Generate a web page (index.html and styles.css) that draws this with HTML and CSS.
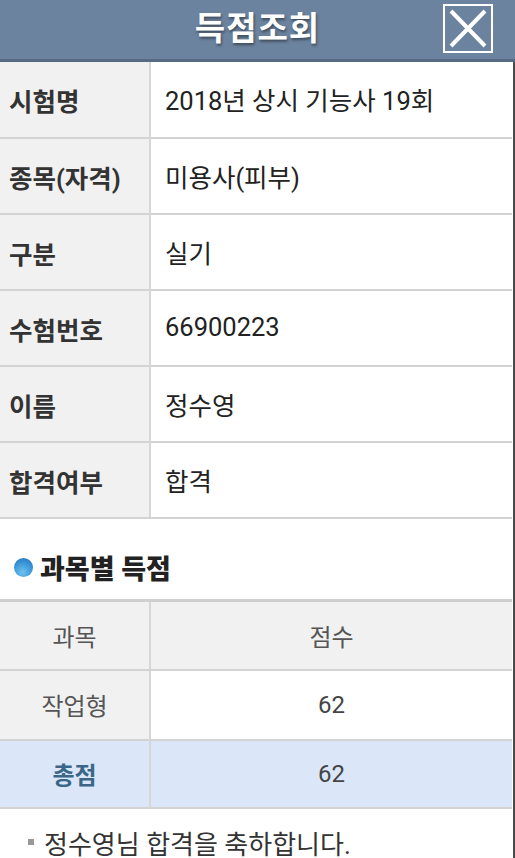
FILE: index.html
```html
<!DOCTYPE html>
<html lang="ko">
<head>
  <meta charset="UTF-8" />
  <meta name="viewport" content="width=device-width, initial-scale=1.0"/>
  <title>득점조회</title>
  <link rel="stylesheet" href="styles.css">
</head>
<body>
  <div class="page">
    <div class="topbar">
      <h1 class="title">득점조회</h1>
      <a class="close" href="#" aria-label="닫기">
        <svg width="46" height="45" viewBox="0 0 46 45">
          <path d="M6 5 L40 40 M40 5 L6 40" stroke="#fff" stroke-width="4" fill="none"/>
        </svg>
      </a>
    </div>

    <div class="content">
      <table class="info">
        <tr><th>시험명</th><td>2018년 상시 기능사 19회</td></tr>
        <tr><th>종목(자격)</th><td>미용사(피부)</td></tr>
        <tr><th>구분</th><td>실기</td></tr>
        <tr><th>수험번호</th><td>66900223</td></tr>
        <tr><th>이름</th><td>정수영</td></tr>
        <tr><th>합격여부</th><td>합격</td></tr>
      </table>

      <!-- 과목별 득점 -->
      <h2 class="section"><span class="dot"></span>과목별 득점</h2>

      <table class="scores">
        <tr class="head"><th>과목</th><th>점수</th></tr>
        <tr><th>작업형</th><td>62</td></tr>
        <tr class="total"><th>총점</th><td>62</td></tr>
      </table>

      <p class="msg"><span class="sq"></span>정수영님 합격을 축하합니다.</p>
    </div>
  </div>
</body>
</html>
```

FILE: styles.css
```css
* {
  box-sizing: border-box;
  margin: 0;
  padding: 0;
}

body {
  background: #fff;
  font-family: Roboto, "Noto Sans CJK KR", sans-serif;
  color: #222;
  overflow: hidden;
}

.page {
  width: 515px;
  height: 858px;
}

.topbar {
  height: 62px;
  background: #6c839f;
  border-bottom: 3px solid #566a82;
  display: flex;
  align-items: center;
  justify-content: center;
  position: relative;
}

.title {
  font-size: 33px;
  font-weight: bold;
  color: #fff;
  letter-spacing: 1px;
  text-shadow: 1px 2px 3px rgba(0, 0, 0, 0.45);
  margin-top: -8px;
}

.close {
  position: absolute;
  left: 443px;
  top: 4px;
  width: 50px;
  height: 49px;
  border: 2px solid #fff;
  display: flex;
  align-items: center;
  justify-content: center;
}

.content {
  width: 515px;
  border-right: 2px solid #4a4a4a;
  padding-right: 1px;
  height: 796px;
}

table {
  width: 100%;
  border-collapse: collapse;
}

.info th,
.info td {
  height: 76px;
  border-bottom: 2px solid #d3d3d3;
  font-size: 25.5px;
  text-align: left;
  vertical-align: middle;
}

.info th {
  width: 150px;
  background: #f1f1f1;
  color: #333;
  font-weight: bold;
  padding-left: 9px;
  border-right: 2px solid #d6d6d6;
}

.info td {
  padding-left: 14px;
  color: #222;
  padding-bottom: 2px;
}

.section {
  height: 80px;
  display: flex;
  align-items: center;
  font-size: 27px;
  font-weight: 900;
  color: #222;
  padding-left: 14px;
  padding-top: 16px;
}

.dot {
  width: 19px;
  height: 19px;
  border-radius: 50%;
  background: radial-gradient(circle at 45% 75%, #6fc3ee 0%, #3a94d6 55%, #1f6fb5 100%);
  margin-right: 7px;
}

.scores th,
.scores td {
  font-size: 24px;
  font-weight: normal;
  text-align: center;
  vertical-align: middle;
  color: #444;
  border-bottom: 2px solid #d3d3d3;
}

.scores tr:first-child th {
  border-top: 3px solid #cfcfcf;
}

.scores th:first-child {
  width: 150px;
  background: #f1f1f1;
  border-right: 2px solid #d6d6d6;
  color: #555;
}

.scores .head th {
  height: 69px;
  background: #f1f1f1;
  color: #555;
}

.scores tr th,
.scores tr td {
  height: 70px;
}

.scores .total th,
.scores .total td {
  background: #dbe7f8;
  height: 68px;
}

.scores .total th {
  color: #3a6788;
  font-weight: bold;
}

.msg {
  font-size: 26px;
  color: #333;
  padding-left: 28px;
  padding-top: 15px;
  display: flex;
  align-items: center;
}

.sq {
  width: 6px;
  height: 6px;
  background: #999;
  margin-right: 10px;
}
```
